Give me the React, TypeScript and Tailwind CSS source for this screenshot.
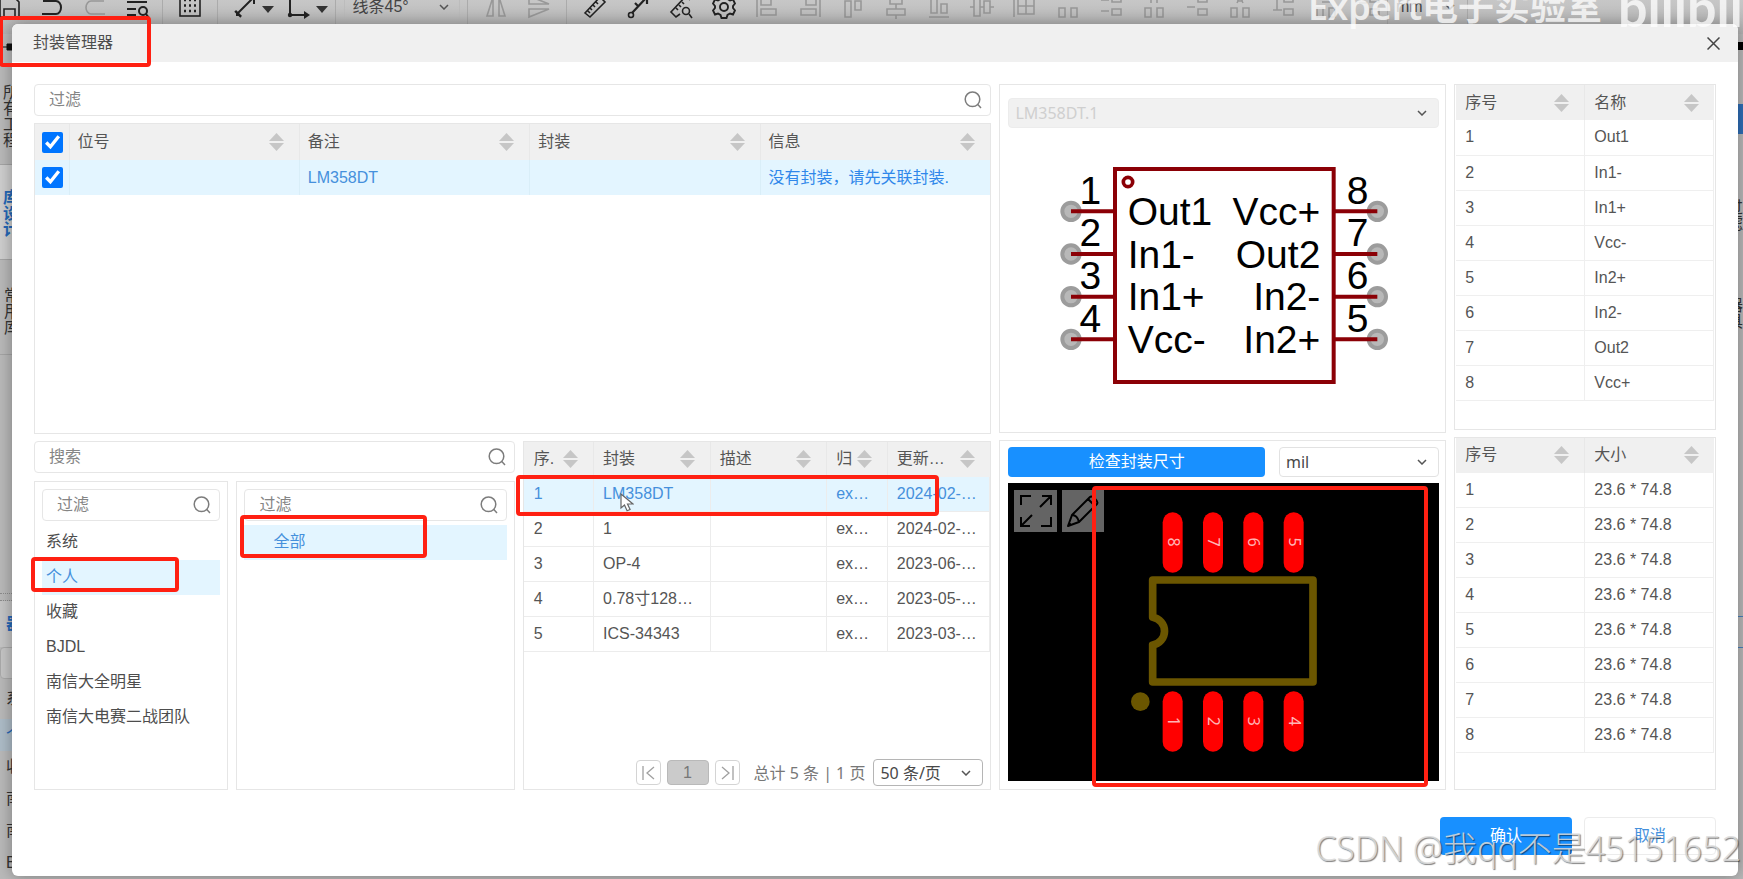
import React from "react";

const SANS = "font-['Liberation_Sans','Noto_Sans_CJK_SC',sans-serif]";
const HUMANIST = "font-['Noto_Sans','Noto_Sans_CJK_SC',sans-serif]";

/* ---------- small shared pieces ---------- */

function SortIcon() {
  return (
    <svg className="h-[18px] w-[15px] shrink-0" viewBox="0 0 15 18" fill="#c6c6c6" aria-hidden="true">
      <path d="M7.5 0 15 8H0z" />
      <path d="M7.5 18 0 10h15z" />
    </svg>
  );
}

function SearchIcon() {
  return (
    <svg className="size-[18px] shrink-0" viewBox="0 0 18 18" fill="none" stroke="#7c7c7c" strokeWidth="1.5" aria-hidden="true">
      <circle cx="8.5" cy="8.3" r="7.3" />
      <path d="M13.8 13.6 17 17" />
    </svg>
  );
}

function Chevron({ className = "" }: { className?: string }) {
  return (
    <svg className={`h-[6px] w-[10px] ${className}`} viewBox="0 0 10 6" fill="none" stroke="#555" strokeWidth="1.5" aria-hidden="true">
      <path d="M1 1l4 4 4-4" />
    </svg>
  );
}

function SearchBox({ label }: { label: string }) {
  return (
    <label className="flex h-8 w-full shrink-0 items-center rounded-sm border border-[#e6e6e6] bg-white pr-2 pl-[14px]">
      <input
        type="text"
        aria-label={label}
        placeholder={label}
        className="min-w-0 flex-1 bg-transparent text-base text-[#555] outline-none placeholder:text-[#858585]"
      />
      <SearchIcon />
    </label>
  );
}

function Picker({
  label,
  value,
  className,
  disabled = false,
}: {
  label: string;
  value: string;
  className: string;
  disabled?: boolean;
}) {
  return (
    <div className={`relative flex items-center rounded-sm border ${className}`}>
      <select
        aria-label={label}
        disabled={disabled}
        defaultValue={value}
        className={`h-full w-full appearance-none bg-transparent pl-[6px] text-base outline-none ${HUMANIST} ${disabled ? "text-[#cfcfcf]" : "text-[#484848]"}`}
      >
        <option>{value}</option>
      </select>
      <Chevron className="pointer-events-none absolute right-[11px]" />
    </div>
  );
}

function Mark({ className }: { className: string }) {
  return <div className={`pointer-events-none absolute z-20 rounded-[4px] border-4 border-[#ff2012] ${className}`} />;
}

function HeadCell({ text, pad = "pl-[10px]", last = false }: { text: string; pad?: string; last?: boolean }) {
  return (
    <th className={`border-[#e8e8e8] p-0 text-left font-normal ${last ? "" : "border-r"}`}>
      <div className={`flex items-center justify-between overflow-hidden pr-[15px] whitespace-nowrap ${pad}`}>
        <span>{text}</span>
        <SortIcon />
      </div>
    </th>
  );
}

/* ---------- page behind the dialog ---------- */

function ToolIcon({ children, dim = false, fit = false }: { children: React.ReactNode; dim?: boolean; fit?: boolean }) {
  return (
    <span className={`flex shrink-0 justify-center ${fit ? "w-[26px]" : "w-[43px]"}`}>
      <svg
        className="size-6"
        viewBox="0 0 24 24"
        fill="none"
        stroke={dim ? "#989898" : "#222"}
        strokeWidth="1.6"
        aria-hidden="true"
      >
        {children}
      </svg>
    </span>
  );
}

function Caret() {
  return (
    <svg className="mt-1 h-[7px] w-[12px]" viewBox="0 0 12 7" fill="#333" aria-hidden="true">
      <path d="M0 0h12L6 7z" />
    </svg>
  );
}

const alignIcons: string[] = [
  "M2 2v20M6 4h10v6H6zM6 14h15v6H6z",
  "M22 2v20M8 4h10v6H8zM3 14h15v6H3z",
  "M2 2h20M4 6h6v16H4zM14 6h6v9h-6z",
  "M12 0v3M12 9v5M12 20v4M6 3h12v6H6zM3 14h18v6H3z",
  "M2 22h20M4 2h6v16H4zM14 9h6v9h-6z",
  "M0 12h4M10 12h4M20 12h4M4 3h6v18H4zM14 6h6v12h-6z",
  "M1 2v20M5 3h16v16H5zM13 3v16M5 11h16",
  "M3 13h6v9H3zM15 13h6v9h-6zM4 4h4M16 4h4",
  "M13 1h9v6h-9zM13 14h9v6h-9zM2 5h8M2 16h8",
  "M3 13h6v9H3zM15 13h6v9h-6zM3 3h6v5M15 8V3h6",
  "M13 1h9v6h-9zM13 14h9v6h-9zM2 12h8",
  "M3 13h6v9H3zM15 13h6v9h-6zM9 6h6M9 8l3-6 3 6",
  "M13 1h9v6h-9zM13 14h9v6h-9zM2 4h9M6 4v11M2 15h9",
  "M3 13h6v9H3zM15 13h6v9h-6zM8 7h8",
  "M13 1h9v6h-9zM13 14h9v6h-9zM2 8h8",
];

function Toolbar() {
  return (
    <div className="-mt-5 flex h-[54px] shrink-0 items-stretch bg-linear-to-b from-[#d2d2d2] to-[#b4b4b4]">
      <div className="-ml-[13px] flex w-[176px] items-center border-r border-[#ababab]">
        <ToolIcon>
          <path d="M3 2h14l5 5v15H3zM7 22v-8h11v8" />
        </ToolIcon>
        <ToolIcon>
          <path d="M3 6h13a5 6.500 0 0 1 0 13H2" strokeWidth="2" />
        </ToolIcon>
        <ToolIcon dim>
          <path d="M21 6H8a5 6.500 0 0 0 0 13h14" />
        </ToolIcon>
        <ToolIcon>
          <path d="M1 7h20M1 14h9M1 20h9" strokeWidth="2" />
          <circle cx="17" cy="16" r="4" strokeWidth="2" />
          <path d="m20 19 3 4" strokeWidth="2" />
        </ToolIcon>
      </div>
      <div className="flex w-[55px] items-center justify-center border-r border-[#ababab]">
        <ToolIcon>
          <rect x="2" y="0" width="20" height="21" />
          <path d="M6 5h13M6 10.500h13M6 16h13" strokeDasharray="2 3" strokeWidth="2.500" />
        </ToolIcon>
      </div>
      <div className="flex w-[118px] items-center gap-1 border-r border-[#ababab] pl-[14px]">
        <ToolIcon fit>
          <path d="M4 19 20 3M2 16l6 6M14 3h7v6" strokeWidth="2" />
          <path d="M3 21v-6l6 6z" fill="#222" stroke="none" />
        </ToolIcon>
        <Caret />
        <span className="w-1" />
        <ToolIcon fit>
          <path d="M3 1v19h18" strokeWidth="2" />
          <path d="m17 16 6 4-6 4z" fill="#222" stroke="none" />
          <circle cx="3" cy="20" r="2.200" fill="#222" stroke="none" />
        </ToolIcon>
        <Caret />
      </div>
      <div className="flex w-[132px] items-center justify-center border-r border-[#ababab]">
        <div className="flex h-[32px] w-[116px] items-center justify-between rounded-sm border border-[#bcbcbc] pr-[10px] pl-2 text-base text-[#444]">
          <span>线条45°</span>
          <Chevron />
        </div>
      </div>
      <div className="flex w-[99px] items-center justify-center border-r border-[#ababab]">
        <ToolIcon dim>
          <path d="M9 2v19H3zM15 2v19h6z" />
        </ToolIcon>
        <ToolIcon dim>
          <path d="M2 9h20L2 1zM2 14h20L2 22z" />
        </ToolIcon>
      </div>
      <div className="flex w-[821px] items-center border-r border-[#ababab] pl-[6px]">
        <ToolIcon>
          <path d="M2 18 17 2l5 5L7 22zM7 13l2 2M10 10l2 2M13 7l2 2M5 16l2 2" />
        </ToolIcon>
        <ToolIcon>
          <path d="m6 18 14-15M14 3h7v6M9 8l4 4" strokeWidth="2.200" />
          <circle cx="5" cy="20" r="2.500" />
        </ToolIcon>
        <ToolIcon>
          <path d="M11 19 7 22l-5-5L17 1l4 4M7 13l2 2M10 10l2 2M13 7l2 2" />
          <circle cx="17" cy="16" r="3.500" />
          <path d="m20 19 3 4" />
        </ToolIcon>
        <ToolIcon>
          <path
            d="M9.500 1h5l1 3 2.500 1.500 3-1 2 4-2 2.500v2l2 2.500-2 4-3-1-2.500 1.500-1 3h-5l-1-3L6 18.500l-3 1-2-4L3 13v-2L1 8.500l2-4 3 1L8.500 4z"
            strokeWidth="1.900"
          />
          <circle cx="12" cy="12" r="4" strokeWidth="1.900" />
        </ToolIcon>
        {alignIcons.map((d) => (
          <ToolIcon key={d} dim>
            <path d={d} />
          </ToolIcon>
        ))}
      </div>
      <div className="flex w-[80px] items-center justify-between border-r border-[#ababab] pr-3 pl-2 text-base text-[#444]">
        <span>mm</span>
        <Chevron />
      </div>
    </div>
  );
}

function Backdrop() {
  return (
    <div className="flex h-full flex-col">
      <Toolbar />
      <div className="flex min-h-0 flex-1 justify-between text-base leading-4 text-[#333]">
        <div className="flex w-10 flex-col">
          <div className="h-[133px] border-b border-[#a5a5a5] pt-2 pl-[3px]">
            <svg className="h-[10px] w-3" viewBox="0 0 12 10" aria-hidden="true">
              <path d="M0 5h4M4 2h8v6H4z" fill="#111" stroke="#111" />
            </svg>
            <p className="mt-[33px] w-4 break-all">所有工程</p>
          </div>
          <div className="h-24 border-b border-[#a5a5a5] bg-[#cfcfcf] pt-[25px] pl-[3px] font-bold text-[#2468b8]">
            <p className="w-4 break-all">库设计</p>
          </div>
          <div className="h-24 border-b border-[#a5a5a5] pt-7 pl-1">
            <p className="w-4 break-all">常用库</p>
          </div>
          <div className="h-[242px]" />
          <div className="h-2 border-y border-dotted border-[#8c8c8c]" />
          <div className="flex h-[47px] items-center bg-[#c6c6c6] pl-[6px] font-bold text-[#2468b8]">器件</div>
          <div className="h-8 shrink-0 rounded border border-[#aaa] bg-[#c6c6c6]" />
          <div className="flex h-10 shrink-0 items-center pl-[6px]">系</div>
          <div className="flex h-8 shrink-0 items-center bg-[#aebdc8] pl-[6px] text-[#2468b8]">个</div>
          <div className="flex h-8 shrink-0 items-center pl-[6px]">收</div>
          <div className="flex h-8 shrink-0 items-center pl-[6px]">南</div>
          <div className="flex h-8 shrink-0 items-center pl-[6px]">南</div>
          <div className="flex h-8 shrink-0 items-center pl-[6px]">B</div>
        </div>
        <div className="flex w-4 flex-col items-end">
          <div className="mt-2 h-2 w-4 bg-black" />
          <div className="mt-[54px] h-[30px] w-4 bg-[#2f6fb8]" />
          <div className="mt-[66px]">
            <p className="w-4 break-all">过滤</p>
          </div>
          <div className="mt-[66px]">
            <p className="w-4 break-all">器具</p>
          </div>
          <div className="mt-[286px] h-8 w-4 border-y border-[#4a80bd]" />
        </div>
      </div>
    </div>
  );
}

/* ---------- dialog panels ---------- */

function ComponentTable() {
  return (
    <div className="min-h-0 flex-1 border border-[#e6e6e6]">
      <table className="w-full table-fixed border-collapse text-base text-[#555]">
        <colgroup>
          <col className="w-[34px]" />
          <col />
          <col />
          <col />
          <col />
        </colgroup>
        <thead className="bg-[#f0f0f0]">
          <tr className="h-[36px]">
            <th className="border-r border-[#e8e8e8] p-0 pl-[7px]">
              <input type="checkbox" defaultChecked aria-label="全选" className="block size-[21px] accent-[#0075ff]" />
            </th>
            <HeadCell text="位号" pad="pl-2" />
            <HeadCell text="备注" pad="pl-2" />
            <HeadCell text="封装" pad="pl-2" />
            <HeadCell text="信息" pad="pl-2" last />
          </tr>
        </thead>
        <tbody>
          <tr className="h-[35px] bg-[#e3f5ff] text-[#4590dc]">
            <td className="border-r border-[#d9eef8] p-0 pl-[7px]">
              <input type="checkbox" defaultChecked aria-label="LM358DT" className="block size-[21px] accent-[#0075ff]" />
            </td>
            <td className="border-r border-[#d9eef8] p-0 pl-2" />
            <td className="border-r border-[#d9eef8] p-0 pl-2">LM358DT</td>
            <td className="border-r border-[#d9eef8] p-0 pl-2" />
            <td className="p-0 pl-2 whitespace-nowrap text-[#2f87ea]">没有封装，请先关联封装.</td>
          </tr>
        </tbody>
      </table>
    </div>
  );
}

const owners = ["系统", "个人", "收藏", "BJDL", "南信大全明星", "南信大电赛二战团队"];

function LibraryBrowser() {
  return (
    <div className="flex min-w-0 flex-[482] flex-col gap-2">
      <SearchBox label="搜索" />
      <div className="grid min-h-0 flex-1 grid-cols-[195fr_279fr] gap-2">
        <div className="min-w-0 border border-[#e6e6e6] p-[7px]">
          <SearchBox label="过滤" />
          <ul className="mt-1 text-base text-[#4d4d4d]">
            {owners.map((name) => (
              <li
                key={name}
                className={`relative flex h-[35px] items-center pl-1 whitespace-nowrap ${name === "个人" ? "bg-[#e3f5ff] text-[#4590dc]" : ""}`}
              >
                {name}
                {name === "个人" && <Mark className="-top-[3px] -left-[11px] h-[35px] w-[148px]" />}
              </li>
            ))}
          </ul>
        </div>
        <div className="min-w-0 border border-[#e6e6e6] p-[7px]">
          <SearchBox label="过滤" />
          <ul className="mt-1 text-base">
            <li className="relative flex h-[35px] items-center bg-[#e3f5ff] pl-[29px] text-[#4590dc]">
              全部
              <Mark className="-top-[10px] -left-1 h-[43px] w-[187px]" />
            </li>
          </ul>
        </div>
      </div>
    </div>
  );
}

const footprints = [
  ["1", "LM358DT", "", "ex…", "2024-02-…"],
  ["2", "1", "", "ex…", "2024-02-…"],
  ["3", "OP-4", "", "ex…", "2023-06-…"],
  ["4", "0.78寸128…", "", "ex…", "2023-05-…"],
  ["5", "ICS-34343", "", "ex…", "2023-03-…"],
];

function FootprintTable() {
  return (
    <div className="relative flex min-w-0 flex-[468] flex-col justify-between border border-[#e6e6e6]">
      <table className="w-full table-fixed border-collapse text-base text-[#555]">
        <colgroup>
          <col className="w-[15%]" />
          <col className="w-[25%]" />
          <col className="w-[25%]" />
          <col className="w-[13%]" />
          <col className="w-[22%]" />
        </colgroup>
        <thead className="bg-[#f0f0f0]">
          <tr className="h-[35px]">
            <HeadCell text="序." pad="pl-[10px]" />
            <HeadCell text="封装" pad="pl-[9px]" />
            <HeadCell text="描述" pad="pl-[9px]" />
            <HeadCell text="归" pad="pl-[9px]" />
            <HeadCell text="更新…" pad="pl-[9px]" last />
          </tr>
        </thead>
        <tbody>
          {footprints.map((row, r) => (
            <tr
              key={row[0]}
              className={`h-[35px] border-b border-[#ececec] ${r === 0 ? "bg-[#e3f5ff] text-[#4590dc]" : ""}`}
            >
              {row.map((cell, c) => (
                <td key={c} className={`border-r border-[#ececec] p-0 whitespace-nowrap ${c === 0 ? "pl-[10px]" : "pl-[9px]"}`}>
                  {cell}
                </td>
              ))}
            </tr>
          ))}
        </tbody>
      </table>

      <div className="flex items-center justify-end pr-[7px] pb-[3px]">
        <button type="button" aria-label="首页" className="flex h-[25px] w-[25px] items-center justify-center rounded-sm border border-[#d4d4d4] bg-white">
          <svg className="h-[14px] w-[13px]" viewBox="0 0 13 14" fill="none" stroke="#a0a0a0" strokeWidth="1.300" aria-hidden="true">
            <path d="M1 0v14M12 1 5 7l7 6" />
          </svg>
        </button>
        <button type="button" className="ml-[6px] h-[25px] w-[42px] rounded-sm border border-[#b9b9b9] bg-[#cbcbcb] text-base leading-none text-[#777]">
          1
        </button>
        <button type="button" aria-label="末页" className="ml-[6px] flex h-[25px] w-[25px] items-center justify-center rounded-sm border border-[#d4d4d4] bg-white">
          <svg className="h-[14px] w-[13px]" viewBox="0 0 13 14" fill="none" stroke="#a0a0a0" strokeWidth="1.300" aria-hidden="true">
            <path d="M12 0v14M1 1l7 6-7 6" />
          </svg>
        </button>
        <span className={`mr-2 ml-[14px] text-base leading-none whitespace-nowrap text-[#777] ${HUMANIST}`}>总计 5 条 | 1 页</span>
        <Picker label="每页条数" value="50 条/页" className="h-[27px] w-[110px] border-[#b5b5b5] bg-white" />
      </div>

      <Mark className="top-[33px] -left-[8px] h-[41px] w-[423px]" />
      <svg className="pointer-events-none absolute top-[51px] left-[96px] h-[19px] w-[14px]" viewBox="0 0 14 19" aria-hidden="true">
        <path d="M1 1v14l3.500-3 2.600 5.800 3-1.300-2.600-5.500H13z" fill="#fff" stroke="#666" strokeWidth="1.200" />
      </svg>
    </div>
  );
}

const symbolPins = [
  { y: 245, left: "1", leftName: "Out1", right: "8", rightName: "Vcc+" },
  { y: 373, left: "2", leftName: "In1-", right: "7", rightName: "Out2" },
  { y: 501, left: "3", leftName: "In1+", right: "6", rightName: "In2-" },
  { y: 629, left: "4", leftName: "Vcc-", right: "5", rightName: "In2+" },
];

function SymbolPreview() {
  return (
    <div className="flex min-h-0 flex-1 flex-col border border-[#e6e6e6] pt-[13px] pr-[6px] pl-2">
      <Picker label="器件" value="LM358DT.1" disabled className="h-[30px] shrink-0 border-[#ececec] bg-[#f1f1f1]" />
      <div className="flex min-h-0 flex-1 items-center justify-center pb-2">
        <svg className={`h-[218px] w-[328px] ${SANS}`} viewBox="207 112 984 654" role="img" aria-label="LM358DT">
          <rect x="372" y="118" width="656" height="639" fill="#fff" stroke="#8b0006" strokeWidth="12" />
          <circle cx="411" cy="157" r="14" fill="none" stroke="#8b0006" strokeWidth="11" />
          {symbolPins.map((p) => (
            <g key={p.y}>
              <circle cx="240" cy={p.y} r="26" fill="#b8b8b8" stroke="#9c9c9c" strokeWidth="12" />
              <circle cx="1159" cy={p.y} r="26" fill="#b8b8b8" stroke="#9c9c9c" strokeWidth="12" />
              <path d={`M240 ${p.y}H372M1028 ${p.y}H1159`} stroke="#8b0006" strokeWidth="12" />
              <g fontSize="117" fill="#000">
                <text x="298" y={p.y - 23} textAnchor="middle">{p.left}</text>
                <text x="1100" y={p.y - 23} textAnchor="middle">{p.right}</text>
                <text x="410" y={p.y + 41}>{p.leftName}</text>
                <text x="988" y={p.y + 41} textAnchor="end">{p.rightName}</text>
              </g>
            </g>
          ))}
        </svg>
      </div>
    </div>
  );
}

const pads = [
  { x: 548, top: "8", bottom: "1" },
  { x: 669, top: "7", bottom: "2" },
  { x: 790, top: "6", bottom: "3" },
  { x: 911, top: "5", bottom: "4" },
];

function FootprintPreview() {
  return (
    <div className="flex min-h-0 flex-1 flex-col border border-[#e6e6e6] pt-[6px] pr-[6px] pb-2 pl-2">
      <div className="flex shrink-0 gap-[14px]">
        <button type="button" className="h-[30px] flex-[258] rounded-sm bg-[#1890ff] text-base leading-none text-white">
          检查封装尺寸
        </button>
        <Picker label="单位" value="mil" className="h-[30px] flex-[159] border-[#e2e2e2] bg-white" />
      </div>
      <div className="relative mt-[6px] flex min-h-0 flex-1 items-center justify-center bg-black">
        <svg className={`h-[240px] w-[186px] ${HUMANIST}`} viewBox="423 277 558 718" role="img" aria-label="封装预览">
          <path
            d="M488 675V786H969V480H488V592A42 42 0 0 1 488 675"
            fill="none"
            stroke="#6b5600"
            strokeWidth="23"
            strokeLinejoin="round"
            strokeLinecap="round"
          />
          <circle cx="451" cy="845" r="28" fill="#6b5600" />
          {pads.map((p) => (
            <g key={p.x}>
              <rect x={p.x - 30} y="277" width="60" height="181" rx="30" fill="#f00" />
              <rect x={p.x - 30} y="814" width="60" height="181" rx="30" fill="#f00" />
              <g fontSize="48" fill="#ffb4b4" textAnchor="middle">
                <text transform={`translate(${p.x - 15} 366) rotate(90)`}>{p.top}</text>
                <text transform={`translate(${p.x - 15} 904) rotate(90)`}>{p.bottom}</text>
              </g>
            </g>
          ))}
        </svg>
        <div className="absolute top-[7px] left-[6px] flex gap-[5px]">
          <button type="button" aria-label="适应窗口" className="flex h-[42px] w-[43px] items-center justify-center bg-[#646464]">
            <svg className="size-8" viewBox="0 0 32 32" fill="none" stroke="#000" strokeWidth="2" aria-hidden="true">
              <path d="M1 10V1h10M22 1h9v9M31 1 20 12M31 22v9H21M10 31H1v-9M1 31l11-11" />
            </svg>
          </button>
          <button type="button" aria-label="编辑" className="flex size-[42px] items-center justify-center bg-[#646464]">
            <svg className="size-8" viewBox="0 0 32 32" fill="none" stroke="#000" strokeWidth="2" strokeLinejoin="round" aria-hidden="true">
              <path d="M1 31 5 20 23 2c2-2 9 4 7 7L12 27zM5 20c4 0 6 3 7 7M21 4l7 7M2 28l2 2" />
            </svg>
          </button>
        </div>
        <Mark className="top-[3px] right-[11px] -bottom-[6px] left-[84px]" />
      </div>
    </div>
  );
}

function PinTable({ title, rows, className }: { title: string; rows: string[]; className: string }) {
  return (
    <div className={`min-h-0 border border-[#e6e6e6] px-px ${className}`}>
      <table className="w-full table-fixed border-collapse text-base text-[#555]">
        <thead className="bg-[#f0f0f0]">
          <tr className="h-[35px]">
            <HeadCell text="序号" pad="pl-[9px]" />
            <HeadCell text={title} pad="pl-[9px]" last />
          </tr>
        </thead>
        <tbody>
          {rows.map((value, i) => (
            <tr key={i} className="h-[35px] border-b border-[#efefef]">
              <td className="border-r border-[#efefef] p-0 pl-[9px]">{i + 1}</td>
              <td className="border-r border-[#efefef] p-0 pl-[9px]">{value}</td>
            </tr>
          ))}
        </tbody>
      </table>
    </div>
  );
}

const pinNames = ["Out1", "In1-", "In1+", "Vcc-", "In2+", "In2-", "Out2", "Vcc+"];
const padSizes = pinNames.map(() => "23.6 * 74.8");

function Dialog() {
  return (
    <section role="dialog" aria-label="封装管理器" className="relative flex h-full flex-col rounded-md bg-white shadow-[0_0_16px_rgba(0,0,0,0.35)]">
      <header className="flex h-[38px] shrink-0 items-center justify-between rounded-t-md bg-[#f0f0f0] pr-[18px] pl-[21px]">
        <h1 className="text-base text-[#4d4d4d]">封装管理器</h1>
        <button type="button" aria-label="关闭" className="flex size-[14px] items-center justify-center">
          <svg className="size-[13px]" viewBox="0 0 13 13" stroke="#444" strokeWidth="1.500" aria-hidden="true">
            <path d="M.5.5l12 12M12.500.5l-12 12" />
          </svg>
        </button>
      </header>

      <div className="flex min-h-0 flex-1 gap-2 px-[22px] pt-[22px]">
        <div className="flex min-w-0 flex-[958] flex-col gap-[7px]">
          <div className="flex min-h-0 flex-1 flex-col gap-[7px]">
            <SearchBox label="过滤" />
            <ComponentTable />
          </div>
          <div className="flex min-h-0 flex-1 gap-2">
            <LibraryBrowser />
            <FootprintTable />
          </div>
        </div>
        <div className="flex min-w-0 flex-[447] flex-col gap-[7px]">
          <SymbolPreview />
          <FootprintPreview />
        </div>
        <div className="flex min-w-0 flex-[262] flex-col gap-[7px]">
          <PinTable title="名称" rows={pinNames} className="flex-[345]" />
          <PinTable title="大小" rows={padSizes} className="flex-[353]" />
        </div>
      </div>

      <footer className="flex shrink-0 justify-end gap-3 px-[22px] pt-[27px] pb-[21px] text-base">
        <button type="button" className="h-[38px] w-[132px] rounded-sm bg-[#1890ff] text-white">
          确认
        </button>
        <button type="button" className="h-[38px] w-[132px] rounded-sm border border-[#ececec] bg-white text-[#4590dc]">
          取消
        </button>
      </footer>

      <Mark className="-top-2 -left-[13px] h-[51px] w-[152px]" />
    </section>
  );
}

export default function App() {
  return (
    <main className={`relative h-screen w-full overflow-hidden bg-[#bababa] ${SANS}`}>
      <Backdrop />
      <div className="absolute inset-0 pt-6 pr-[5px] pb-[3px] pl-3">
        <Dialog />
      </div>
      <div
        className={`pointer-events-none absolute -top-[19px] left-[1308px] flex items-end gap-4 leading-none whitespace-nowrap text-white/75 ${HUMANIST}`}
      >
        <span className="text-[36px] leading-[52px] font-semibold">Expert电子实验室</span>
        <span className="font-['Lato','Liberation_Sans',sans-serif] text-[52px] leading-[52px] font-bold">bilibili</span>
      </div>
      <div
        className={`pointer-events-none absolute right-[2px] bottom-[11px] text-[34px] leading-10 font-light whitespace-nowrap text-[#dcdcdc]/85 [text-shadow:1px_1px_1px_rgba(0,0,0,0.5)] ${HUMANIST}`}
      >
        CSDN @我qq不是45151652
      </div>
    </main>
  );
}
